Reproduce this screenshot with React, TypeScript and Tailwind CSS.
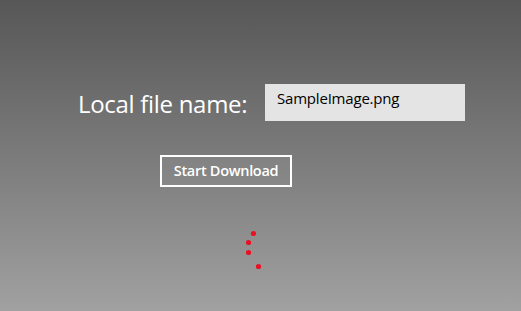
const font = { fontFamily: '"Open Sans", "Noto Sans", sans-serif' };

// progress ring dots, caught mid-animation
const dots = [
  { cx: 7.5, cy: 3.5 },
  { cx: 2.5, cy: 12.5 },
  { cx: 2.5, cy: 22.5 },
  { cx: 12.5, cy: 36.5 },
];

export default function App() {
  return (
    <div
      className="w-[521px] h-[311px] overflow-hidden bg-gradient-to-b from-[#575757] to-[#a1a1a1]"
      style={font}
    >
      <div className="flex flex-col pt-[84px]">
        <div className="flex items-start">
          <span className="ml-[78px] w-[187px] text-[24px] leading-[34px] text-white pt-[3px] tracking-[-0.3px]">
            Local file name:
          </span>
          <div className="w-[200px] h-[37px] bg-[#e4e4e4] pl-[12px] pt-[4px] text-[15px] leading-[20px] text-black tracking-[-0.2px]">
            SampleImage.png
          </div>
        </div>
        <div className="ml-[160px] mt-[34px]">
          <button
            type="button"
            className="w-[132px] h-[32px] border-2 border-white bg-white/5 text-white text-[14.5px] font-semibold tracking-[-0.3px] flex items-center justify-center"
          >
            Start Download
          </button>
        </div>
        <svg className="ml-[246px] mt-[43px]" width="16" height="40" viewBox="0 0 16 40">
          {dots.map((d, i) => (
            <circle key={i} cx={d.cx} cy={d.cy} r="2.6" fill="#e81123" />
          ))}
        </svg>
      </div>
    </div>
  );
}
